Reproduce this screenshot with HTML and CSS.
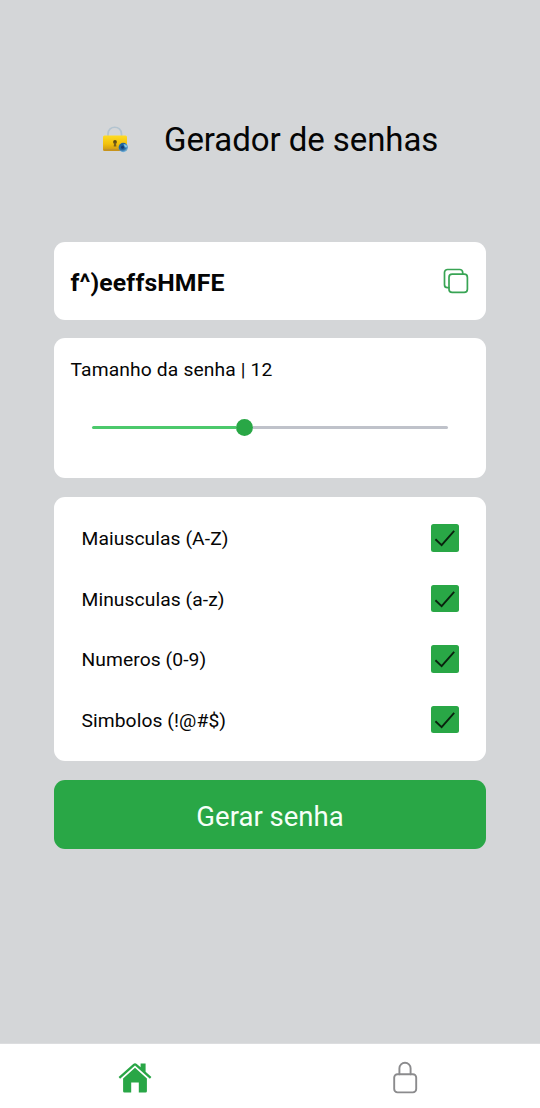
FILE: index.html
```html
<!DOCTYPE html>
<html lang="pt-BR">
<head>
<meta charset="utf-8">
<title>Gerador de senhas</title>
<link rel="stylesheet" href="styles.css">
</head>
<body>
<main class="screen">
  <header class="header">
    <svg class="logo" viewBox="0 0 28 28" aria-hidden="true">
      <defs>
        <linearGradient id="gold" x1="0" y1="0" x2="0" y2="1">
          <stop offset="0" stop-color="#ffdc24"/>
          <stop offset=".55" stop-color="#f2c10b"/>
          <stop offset="1" stop-color="#c99216"/>
        </linearGradient>
        <radialGradient id="globe" cx=".4" cy=".35" r=".65">
          <stop offset="0" stop-color="#1a5f9e"/>
          <stop offset=".6" stop-color="#27689f"/>
          <stop offset="1" stop-color="#7db9df"/>
        </radialGradient>
      </defs>
      <path d="M6 10.500V8C6 -1 19.500 -1 19.500 8V10.500" fill="none" stroke="#b3c4d0" stroke-width="1.700"/>
      <rect x="1" y="9.500" width="24" height="15.500" rx="1.500" fill="url(#gold)"/>
      <path d="M2 23.700h18" stroke="#c0922a" stroke-width="1.300"/>
      <circle cx="13" cy="16" r="1.900" fill="#5b4a13"/>
      <path d="M12.200 16.500h1.700l.5 4h-2.700z" fill="#79601a"/>
      <circle cx="21.300" cy="21.500" r="4.700" fill="url(#globe)"/>
      <path d="M21.500 18l3 .7.700 2.500-2.200.3z" fill="#80c8e8"/>
      <circle cx="20.500" cy="21.300" r="1.500" fill="#123c72"/>
    </svg>
    <h1 class="title">Gerador de senhas</h1>
  </header>

  <section class="card password">
    <span class="password-text">f^)eeffsHMFE</span>
    <svg class="copy" viewBox="0 0 26 26" fill="none" stroke="#38a454" stroke-width="1.700" stroke-linejoin="round" stroke-linecap="round">
      <rect x="6" y="6.200" width="18.400" height="18.200" rx="3.200"/>
      <path d="M19.700 6V4.500a3 3 0 0 0-3-3H4.500a3 3 0 0 0-3 3v12.200a3 3 0 0 0 3 3H6"/>
    </svg>
  </section>

  <section class="card length">
    <p class="label">Tamanho da senha | 12</p>
    <div class="slider">
      <span class="filled"></span>
      <span class="thumb"></span>
      <span class="rest"></span>
    </div>
  </section>

  <section class="card options">
    <div class="option"><span class="name">Maiusculas (A-Z)</span><span class="box"><svg class="check" viewBox="0 0 28 28"><path d="M4.500 15.500l6.300 6L23.600 7"/></svg></span></div>
    <div class="option"><span class="name">Minusculas (a-z)</span><span class="box"><svg class="check" viewBox="0 0 28 28"><path d="M4.500 15.500l6.300 6L23.600 7"/></svg></span></div>
    <div class="option"><span class="name">Numeros (0-9)</span><span class="box"><svg class="check" viewBox="0 0 28 28"><path d="M4.500 15.500l6.300 6L23.600 7"/></svg></span></div>
    <div class="option"><span class="name">Simbolos (!@#$)</span><span class="box"><svg class="check" viewBox="0 0 28 28"><path d="M4.500 15.500l6.300 6L23.600 7"/></svg></span></div>
  </section>

  <button class="generate" type="button">Gerar senha</button>
</main>
<nav class="tabs">
  <a class="tab"><svg class="tab-icon" viewBox="0 0 34 34" fill="#29a646">
    <path d="M.6 17.100L15.200 3.900q1.800-1.500 3.600 0L22.600 7.300V3.400h5v8.400L33.400 17.100l-1.500 1.700L17 5.600 2.100 18.800z"/>
    <path d="M17 7.800L28.900 18.400V31.200a1.300 1.300 0 0 1-1.300 1.300h-6.800V22.500h-7.600v10H6.400A1.300 1.300 0 0 1 5.100 31.200V18.400z"/>
  </svg></a>
  <a class="tab"><svg class="tab-icon" viewBox="0 0 34 34" fill="none" stroke="#8b8b8d" stroke-width="1.900" stroke-linecap="round">
    <path d="M11.400 14.200V8.300a5.600 5.600 0 0 1 11.200 0v5.900"/>
    <rect x="6.200" y="14.200" width="22" height="18.200" rx="3.300"/>
  </svg></a>
</nav>
</body>
</html>
```
FILE: styles.css
```css
* {
  box-sizing: border-box;
}

body {
  margin: 0;
  height: 1108px;
  display: flex;
  flex-direction: column;
  background: #d4d6d8;
  color: #050505;
  font-family: Roboto, sans-serif;
  font-size: 19.25px;
}

.screen {
  flex: 1;
  padding: 115px 54px 0;
  display: flex;
  flex-direction: column;
}

.header {
  height: 50px;
  margin-bottom: 77.4px;
  padding-left: 48px;
  display: flex;
  align-items: center;
  gap: 34px;
}

.logo {
  width: 28px;
  height: 28px;
  flex: none;
}

.title {
  margin: 0;
  font-size: 33px;
  font-weight: 400;
  line-height: 50px;
  letter-spacing: -0.07px;
  white-space: nowrap;
}

.card {
  background: #fff;
  border-radius: 11px;
  margin-bottom: 19.2px;
}

.password {
  height: 77.2px;
  padding: 1px 17px 0 16.5px;
  display: flex;
  align-items: center;
  justify-content: space-between;
  margin-bottom: 18.8px;
}

.password-text {
  padding-top: 3px;
  font-size: 24.75px;
  font-weight: 700;
  letter-spacing: 0.15px;
}

.copy {
  width: 26px;
  height: 26px;
}

.length {
  height: 139.4px;
  padding: 18px 16.5px 0;
}

.label {
  margin: 0;
  line-height: 28px;
  letter-spacing: 0.14px;
}

.slider {
  display: flex;
  align-items: center;
  height: 18px;
  margin: 34px 21.5px 0;
}

.filled,
.rest {
  height: 3px;
}

.filled {
  width: 144px;
  background: #4cc96c;
  border-radius: 2px 0 0 2px;
}

.thumb {
  width: 17px;
  height: 17px;
  border-radius: 50%;
  background: #29a746;
}

.rest {
  flex: 1;
  background: #bfc2ca;
  border-radius: 0 2px 2px 0;
}

.options {
  height: 264px;
  padding: 27.5px 27.5px 0;
  display: flex;
  flex-direction: column;
  gap: 33px;
}

.option {
  height: 27.5px;
  display: flex;
  align-items: center;
  justify-content: space-between;
}

.name {
  padding-top: 1.5px;
  letter-spacing: 0.08px;
}

.box {
  width: 27.5px;
  height: 27.5px;
  border-radius: 2.5px;
  background: #29a746;
}

.check {
  display: block;
  width: 100%;
  height: 100%;
  fill: none;
  stroke: #09230e;
  stroke-width: 1.9;
}

.generate {
  height: 68.4px;
  border: 0;
  border-radius: 11px;
  padding: 4px 0 0;
  background: #29a746;
  color: #f6fff8;
  font: 400 27.5px Roboto, sans-serif;
}

.tabs {
  height: 65px;
  padding-top: 2px;
  display: flex;
  background: #fff;
  border-top: 1px solid #dcdddf;
}

.tab {
  flex: 1;
  display: flex;
  align-items: center;
  justify-content: center;
}

.tab-icon {
  width: 34px;
  height: 34px;
}
```
